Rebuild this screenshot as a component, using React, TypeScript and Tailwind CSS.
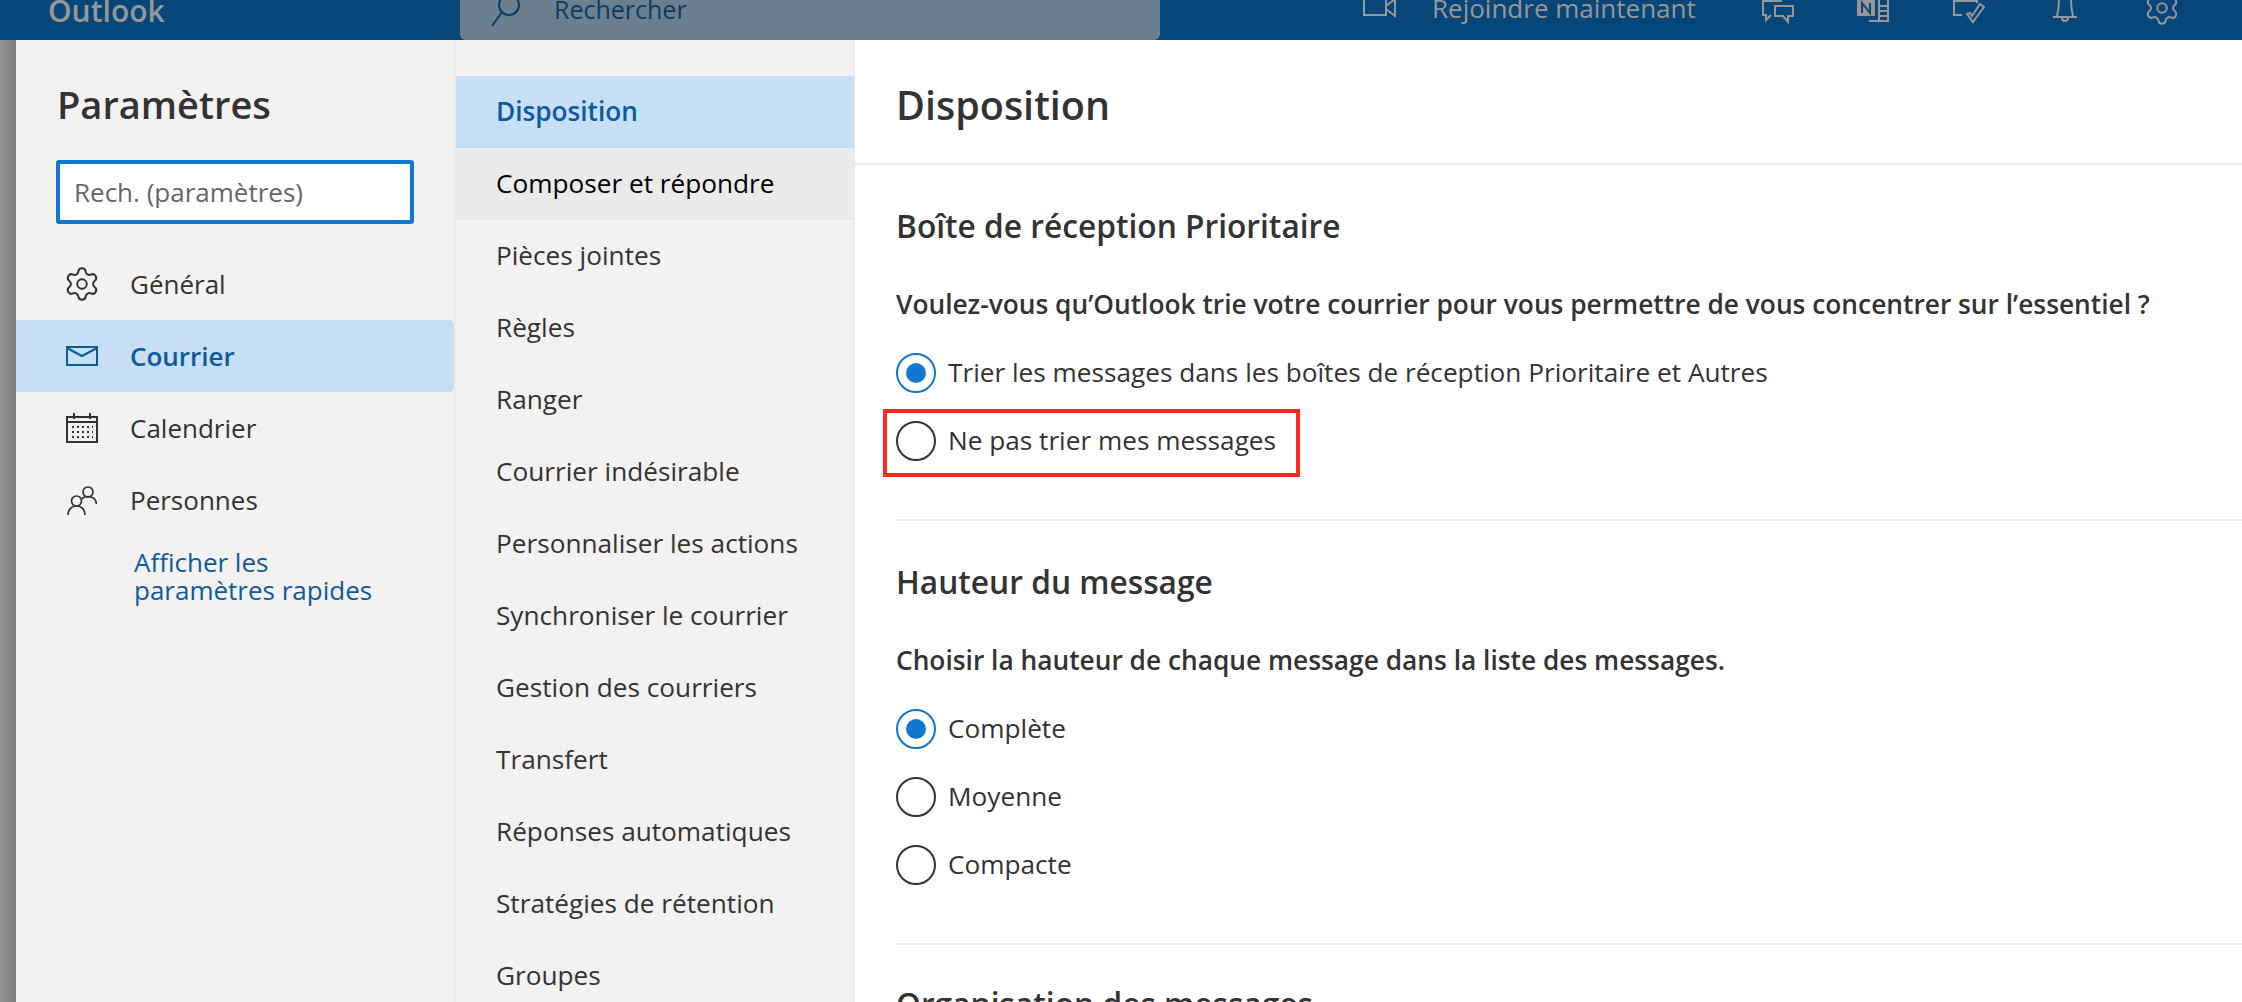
import { Settings } from "lucide-react";

const MAIL_SECTIONS = [
  "Disposition",
  "Composer et répondre",
  "Pièces jointes",
  "Règles",
  "Ranger",
  "Courrier indésirable",
  "Personnaliser les actions",
  "Synchroniser le courrier",
  "Gestion des courriers",
  "Transfert",
  "Réponses automatiques",
  "Stratégies de rétention",
  "Groupes",
];

function VideoIcon() {
  return (
    <svg width="33" height="18" viewBox="0 0 33 18" fill="none" stroke="#979797" strokeWidth="2">
      <rect x="1" y="-2" width="22" height="17" />
      <path d="M23 6l9-7v17l-9-7" />
    </svg>
  );
}

function ChatIcon() {
  return (
    <svg width="32" height="24" viewBox="0 0 32 24" fill="none" stroke="#979797" strokeWidth="2">
      <path d="M20 1H1v14h3v5l5-5" />
      <path d="M13 6h18v10h-5v6l-5-6h-8z" fill="#074678" />
    </svg>
  );
}

function NoteIcon() {
  return (
    <svg width="32" height="24" viewBox="0 0 32 24" fill="none" stroke="#979797" strokeWidth="2">
      <path d="M12 21h19V0" />
      <path d="M22 0v21M22 6h9M22 11h9M22 16h9" />
      <rect x="0" y="0" width="18" height="16" fill="#979797" stroke="none" />
      <path d="M5 13V3l8 10V3" stroke="#074678" strokeWidth="2" />
    </svg>
  );
}

function TaskIcon() {
  return (
    <svg width="32" height="24" viewBox="0 0 32 24" fill="none" stroke="#979797" strokeWidth="2">
      <path d="M24 3V1H1v14h8" />
      <path d="M14 14l6 8L31 7l-4-3-8 12-2-3z" />
    </svg>
  );
}

function BellIcon() {
  return (
    <svg width="24" height="24" viewBox="0 0 24 24" fill="none" stroke="#979797" strokeWidth="2">
      <path d="M4 16c1-4 2-9 2-16M20 16c-1-4-2-9-2-16M0 17h24" />
      <path d="M9 18c0 4 6 4 6 0" />
    </svg>
  );
}

function MailIcon() {
  return (
    <svg width="32" height="20" viewBox="0 0 32 20" fill="none" stroke="#0d5a9e" strokeWidth="2">
      <rect x="1" y="1" width="30" height="18" />
      <path d="M1 2l15 8 15-8" />
    </svg>
  );
}

function CalendarIcon() {
  return (
    <svg width="32" height="30" viewBox="0 0 32 30" fill="none" stroke="#333333" strokeWidth="2">
      <rect x="1" y="4" width="30" height="25" />
      <path d="M1 9h30M8 0v6M24 0v6" />
      <path d="M6 14h21M6 19h21M6 24h21" strokeDasharray="2 3" />
    </svg>
  );
}

function PeopleIcon() {
  return (
    <svg width="30" height="30" viewBox="0 0 30 30" fill="none" stroke="#333333" strokeWidth="1.700">
      <circle cx="21" cy="7" r="5" />
      <circle cx="9.500" cy="16" r="5" />
      <path d="M1 30c0-5 3-9 8.500-9s8.500 4 8.500 9" />
      <path d="M15 14c1-1.500 3-2.500 6-2.500 5 0 8 3 8.500 7.500" />
    </svg>
  );
}

function Radio({ checked }: { checked?: boolean }) {
  if (checked) {
    return (
      <span className="flex h-10 w-10 shrink-0 items-center justify-center rounded-full border-2 border-[#1277d2]">
        <span className="h-5 w-5 rounded-full bg-[#1277d2]" />
      </span>
    );
  }
  return <span className="h-10 w-10 shrink-0 rounded-full border-2 border-[#333333]" />;
}

function RadioRow({ label, checked }: { label: string; checked?: boolean }) {
  return (
    <div className="flex h-[68px] items-center gap-3 text-[26.200px] text-[#333333]">
      <Radio checked={checked} />
      <span>{label}</span>
    </div>
  );
}

export default function App() {
  return (
    <div className="flex h-screen w-full flex-col overflow-hidden bg-white font-['Open_Sans',sans-serif] text-[#333333]">
      <header className="flex h-10 shrink-0 overflow-hidden bg-[#074678] text-[#979797]">
        <div className="flex h-5 w-[460px] items-center pl-12 text-[30px] font-semibold">Outlook</div>
        <div className="flex h-10 w-[700px] rounded-b-md bg-[#6c7f8f] pl-[30px]">
          <div className="flex h-5 items-center gap-[32px] text-[25px] text-[#0f3a5c]">
            <svg width="32" height="32" viewBox="0 0 32 32" fill="none" stroke="#0f3a5c" strokeWidth="2" className="mt-[2px] shrink-0">
              <circle cx="19" cy="10" r="10" />
              <path d="M12 17L2 31" />
            </svg>
            <span>Rechercher</span>
          </div>
        </div>
        <div className="flex h-[24px] flex-1 items-start pl-[203px]">
          <VideoIcon />
          <span className="ml-9 -mt-[10px] text-[26px] leading-[36px]">Rejoindre maintenant</span>
          <div className="ml-[66px]"><ChatIcon /></div>
          <div className="ml-[63px]"><NoteIcon /></div>
          <div className="ml-[64px]"><TaskIcon /></div>
          <div className="ml-[68px]"><BellIcon /></div>
          <Settings size={38} strokeWidth={1.26} className="ml-[66px] -mt-[11px] shrink-0" />
        </div>
      </header>

      <div className="flex min-h-0 flex-1">
        <div className="w-4 shrink-0 bg-gradient-to-r from-[#969696] to-[#7c7c7c]" />

        <aside className="w-[438px] shrink-0 bg-[#f3f2f1]">
          <h1 className="mt-[39px] ml-[41px] text-[38px] leading-[50px] font-semibold">Paramètres</h1>
          <div className="mt-[31px] ml-10 flex h-16 w-[358px] items-center rounded-[3px] border-4 border-[#1277d2] bg-white pl-[14px] text-[26px] text-[#666666]">
            Rech. (paramètres)
          </div>
          <nav className="mt-6 text-[26px]">
            <div className="flex h-[72px] items-center">
              <div className="w-[114px] pl-[47px]">
                <Settings size={38} strokeWidth={1.26} />
              </div>
              <span>Général</span>
            </div>
            <div className="flex h-[72px] items-center rounded-r bg-[#c7dff4] font-semibold text-[#0d5a9e]">
              <div className="w-[114px] pl-[50px]"><MailIcon /></div>
              <span>Courrier</span>
            </div>
            <div className="flex h-[72px] items-center">
              <div className="w-[114px] pl-[50px]"><CalendarIcon /></div>
              <span>Calendrier</span>
            </div>
            <div className="flex h-[72px] items-center">
              <div className="w-[114px] pl-[51px]"><PeopleIcon /></div>
              <span>Personnes</span>
            </div>
          </nav>
          <p className="mt-3 ml-[118px] text-[26px] leading-[28px] text-[#0d5a9e]">
            Afficher les
            <br />
            paramètres rapides
          </p>
        </aside>

        <nav className="w-[400px] shrink-0 border-l-2 border-[#ececeb] bg-[#f3f2f1] pt-9 text-[26.200px]">
          {MAIL_SECTIONS.map((label, i) => (
            <div
              key={label}
              className={
                i === 0
                  ? "flex h-[72px] items-center bg-[#c7dff4] pl-10 font-semibold text-[#0d5a9e]"
                  : i === 1
                    ? "flex h-[72px] items-center bg-[#eaeaea] pl-10 text-black"
                    : "flex h-[72px] items-center pl-10"
              }
            >
              {label}
            </div>
          ))}
        </nav>

        <main className="min-w-0 flex-1 border-l border-[#eaeaea]">
          <div className="flex h-[125px] items-center border-b-2 border-[#eaeaea] pt-2 pl-[41px] text-[39.500px] font-semibold">
            Disposition
          </div>
          <section className="ml-[41px] border-b-2 border-[#eaeaea] pb-[44px]">
            <h2 className="flex h-[122px] items-center text-[31.700px] font-semibold">Boîte de réception Prioritaire</h2>
            <p className="text-[26.300px] leading-[34px] font-semibold whitespace-nowrap">
              Voulez-vous qu’Outlook trie votre courrier pour vous permettre de vous concentrer sur l’essentiel ?
            </p>
            <div className="mt-[18px]">
              <RadioRow label="Trier les messages dans les boîtes de réception Prioritaire et Autres" checked />
              <div className="relative">
                <RadioRow label="Ne pas trier mes messages" />
                <div className="absolute top-[2px] -left-[13px] h-[68px] w-[417px] border-4 border-[#ff2a1f]" />
              </div>
            </div>
          </section>
          <section className="ml-[41px] border-b-2 border-[#eaeaea] pb-[44px]">
            <h2 className="flex h-[122px] items-center text-[31.700px] font-semibold">Hauteur du message</h2>
            <p className="text-[26.300px] leading-[34px] font-semibold whitespace-nowrap">
              Choisir la hauteur de chaque message dans la liste des messages.
            </p>
            <div className="mt-[18px]">
              <RadioRow label="Complète" checked />
              <RadioRow label="Moyenne" />
              <RadioRow label="Compacte" />
            </div>
          </section>
          <section className="ml-[41px]">
            <h2 className="flex h-[118px] items-center text-[31.700px] font-semibold">Organisation des messages</h2>
          </section>
        </main>
      </div>
    </div>
  );
}
